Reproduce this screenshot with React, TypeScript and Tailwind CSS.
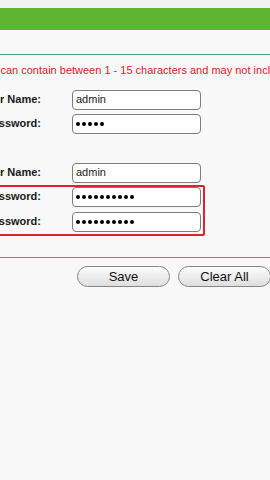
import React from "react";

type Row = {
  label: string;
  value: string;
  secret?: boolean;
};

const oldRows: Row[] = [
  { label: "Old User Name:", value: "admin" },
  { label: "Old Password:", value: "admin", secret: true },
];

const newName: Row = { label: "New User Name:", value: "admin" };

const newPass: Row[] = [
  { label: "New Password:", value: "adminadmin", secret: true },
  { label: "Confirm New Password:", value: "adminadmin", secret: true },
];

const font = { fontFamily: '"Liberation Sans", Arial, sans-serif' };

function Field({ row }: { row: Row }) {
  return (
    <div className="flex h-[20px] items-center gap-[31px]">
      {/* label column, clipped on the left by the window edge */}
      <div className="flex w-[110px] shrink-0 justify-end overflow-hidden">
        <span className="whitespace-nowrap text-[11px] font-bold text-[#1a1a1a]">
          {row.label}
        </span>
      </div>
      <div className="flex h-[20px] w-[129px] shrink-0 items-center rounded-[4px] border border-[#7d7d7d] bg-white px-[3px]">
        {row.secret ? (
          <span className="flex gap-[2px]">
            {Array.from({ length: row.value.length }).map((_, k) => (
              <span key={k} className="h-[4px] w-[4px] rounded-full bg-black" />
            ))}
          </span>
        ) : (
          <span className="text-[11px] text-[#222]">{row.value}</span>
        )}
      </div>
    </div>
  );
}

export default function App() {
  return (
    <div
      className="h-[480px] w-[270px] overflow-hidden bg-[#f8f8f8]"
      style={font}
    >
      <div className="h-[8px] bg-[#f2f2f2]" />
      <div className="h-[22px] bg-[#5db531]" />
      <div className="h-[24px]" />
      <div className="h-[1px] bg-[#4f9c88]" />

      {/* hint */}
      <div className="mt-[7px] ml-[-131px] whitespace-nowrap text-[11px] text-[#e3182a]">
        User Name and Password can contain between 1 - 15 characters and may
        not include spaces.
      </div>

      <div className="ml-[-69px] mt-[11px] flex flex-col">
        <div className="flex flex-col gap-[4px]">
          {oldRows.map((r) => (
            <Field key={r.label} row={r} />
          ))}
        </div>

        <div className="mt-[29px]">
          <Field row={newName} />
        </div>

        {/* highlighted new password rows */}
        <div className="ml-[-2px] mt-[2px] flex w-[276px] flex-col gap-[5px] rounded-[2px] border-2 border-solid border-[#d9252b] pb-[2px]">
          {newPass.map((r) => (
            <Field key={r.label} row={r} />
          ))}
        </div>
      </div>

      <div className="mt-[21px] h-[1px] bg-[#4f9c88]" />

      <div className="mt-[8px] flex gap-[8px] pl-[77px]">
        <button
          type="button"
          className="h-[21px] w-[93px] shrink-0 rounded-full border border-[#858585] bg-gradient-to-b from-[#fdfdfd] to-[#dedede] text-[13px] text-[#111]"
        >
          Save
        </button>
        <button
          type="button"
          className="h-[21px] w-[93px] shrink-0 rounded-full border border-[#858585] bg-gradient-to-b from-[#fdfdfd] to-[#dedede] text-[13px] text-[#111]"
        >
          Clear All
        </button>
      </div>
    </div>
  );
}
